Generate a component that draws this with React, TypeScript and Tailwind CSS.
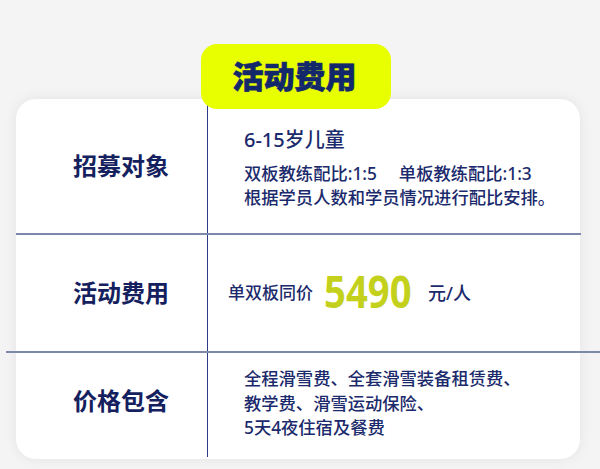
import React from "react";

const cjk = { fontFamily: '"Noto Sans", "Noto Sans CJK SC", sans-serif' };

export default function App() {
  return (
    <div
      className="w-[600px] h-[469px] bg-[#f4f4f4] overflow-hidden pt-[44px]"
      style={cjk}
    >
      <div className="relative z-10 ml-[201px] flex h-[65px] w-[190px] items-center justify-center rounded-[16px] bg-[#e8ff00]">
        <span className="text-[31px] font-black leading-none text-[#13286b] pr-[3px] [-webkit-text-stroke:0.7px_#13286b]">
          活动费用
        </span>
      </div>
      <div className="-mt-[10px] ml-[16px] w-[564px] h-[360px] rounded-[20px] bg-white shadow-[0_0_14px_rgba(0,0,0,0.07)] flex flex-col">
        {/* Row 1 */}
        <div className="flex h-[134px]">
          <div className="w-[192px] shrink-0 border-r border-[#2d3c85] flex items-center pl-[57px]">
            <span className="text-[24px] font-bold leading-[32px] text-[#15215e]">招募对象</span>
          </div>
          <div className="flex-1 pl-[36px] pt-[29px] text-[#1b2a6c] font-medium">
            <div className="text-[20px] leading-[24px]">6-15岁儿童</div>
            <div className="mt-[10px] flex text-[17.3px] leading-[24px]">
              <span>双板教练配比:1:5</span>
              <span className="ml-[22px]">单板教练配比:1:3</span>
            </div>
            <div className="text-[17.3px] leading-[24px]">根据学员人数和学员情况进行配比安排。</div>
          </div>
        </div>
        <div className="h-[2px] w-[565px] bg-[#7c89ab]" />
        {/* Row 2 */}
        <div className="flex h-[116px]">
          <div className="w-[192px] shrink-0 border-r border-[#2d3c85] flex items-center pl-[57px]">
            <span className="text-[24px] font-bold leading-[32px] text-[#15215e]">活动费用</span>
          </div>
          <div className="flex-1 flex items-center pl-[20px] text-[#1b2a6c] font-medium">
            <span className="text-[17px] leading-[24px]">单双板同价</span>
            <span className="ml-[11px] w-[88px] inline-block -mt-[3px]">
              <span className="inline-block origin-left scale-x-[0.87] text-[44px] font-bold leading-none text-[#c4d11c]">
                5490
              </span>
            </span>
            <span className="ml-[16px] text-[18px] leading-[24px]">元/人</span>
          </div>
        </div>
        <div className="-ml-[10px] h-[2px] w-[594px] bg-[#7c89ab]" />
        {/* Row 3 */}
        <div className="flex flex-1">
          <div className="w-[192px] shrink-0 border-r border-[#2d3c85] pl-[57px] pt-[32px] mb-[2px]">
            <span className="text-[24px] font-bold leading-[32px] text-[#15215e]">价格包含</span>
          </div>
          <div className="flex-1 pl-[36px] pt-[14px] text-[#1b2a6c] font-medium text-[17.3px] leading-[24.5px]">
            <div>全程滑雪费、全套滑雪装备租赁费、</div>
            <div>教学费、滑雪运动保险、</div>
            <div>5天4夜住宿及餐费</div>
          </div>
        </div>
      </div>
    </div>
  );
}
